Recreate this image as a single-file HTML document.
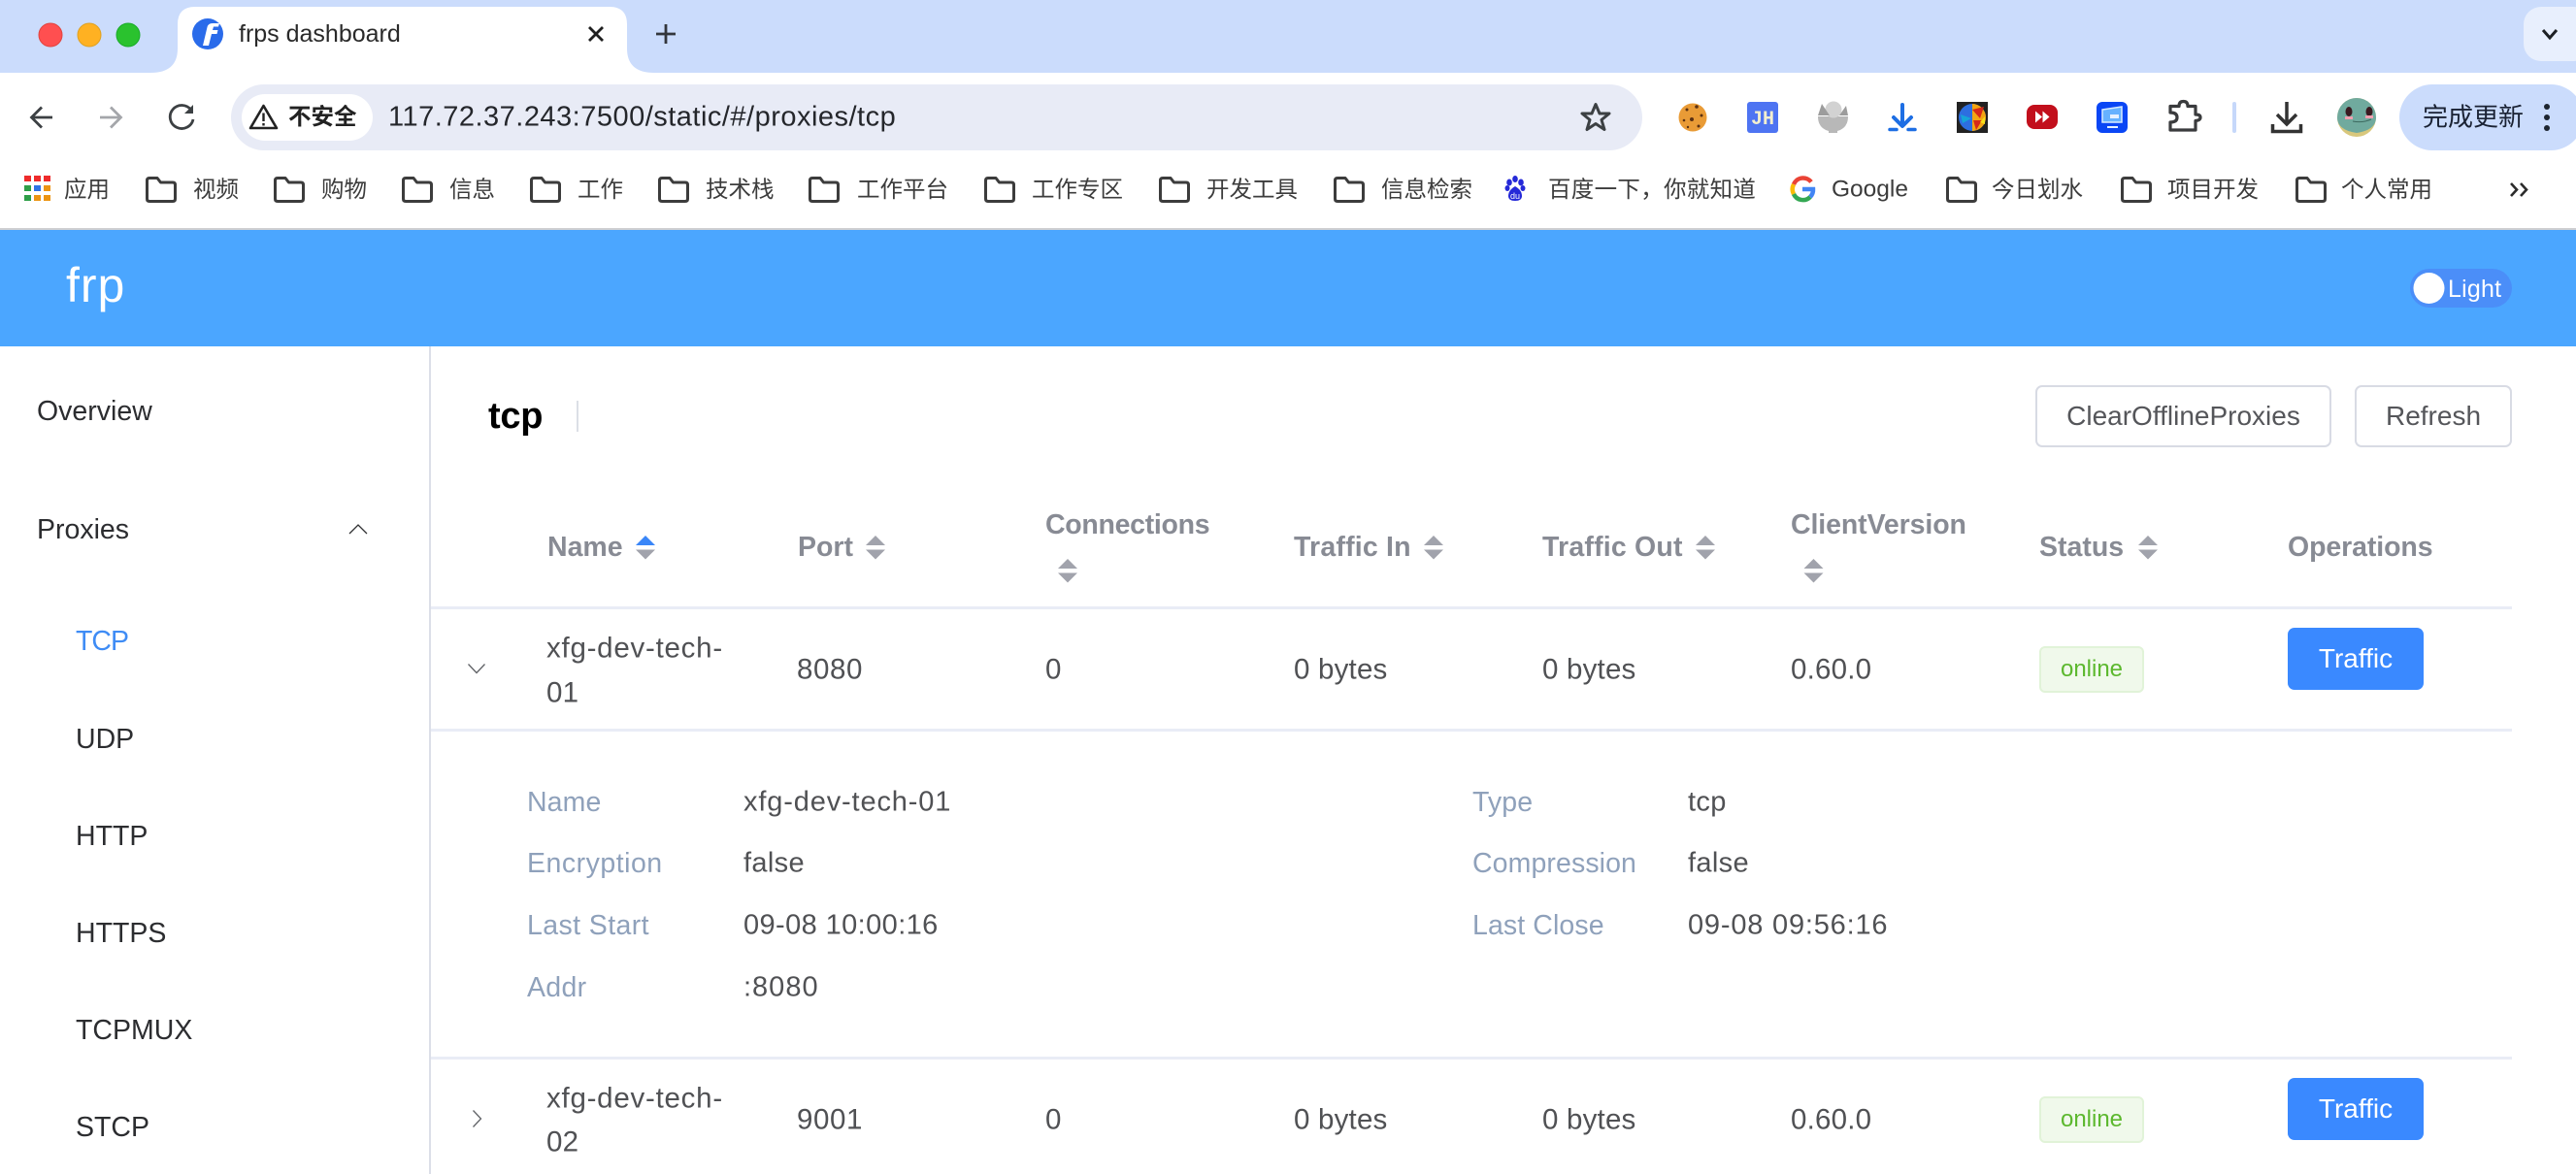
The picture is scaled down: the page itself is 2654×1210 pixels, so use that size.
<!DOCTYPE html>
<html lang="zh">
<head>
<meta charset="utf-8">
<title>frps dashboard</title>
<style>
html,body{margin:0;padding:0;background:#fff;width:2654px;height:1210px;overflow:hidden}
body{position:relative;font-family:"Liberation Sans","Noto Sans CJK SC",sans-serif;color:#303133}
.b{position:absolute}
.t{position:absolute;transform:translateY(-50%);white-space:nowrap;line-height:1.2}
.bm{font-size:23.5px;color:#3c3c3c}
.side{font-size:28.5px;color:#2c2d30;margin-top:1px}
.h{font-size:28.5px;font-weight:700;color:#888b94;margin-top:1px}
.c{font-size:29.5px;color:#505154;letter-spacing:.2px;margin-top:1px}
.l{font-size:28.5px;color:#8fa1bb;letter-spacing:.1px;margin-top:1px}
.v{font-size:29px;color:#505154;letter-spacing:.35px;margin-top:1px}
.line{position:absolute;left:444px;width:2144px;height:2.5px;background:#e9ecf6}
.btn{position:absolute;box-sizing:border-box;border:2.5px solid #d8dbe4;border-radius:7px;background:#fff;font-size:28px;color:#55565a;display:flex;align-items:center;justify-content:center}
.tr{position:absolute;left:2357px;width:140px;height:64px;background:#3a89ff;border-radius:7px;color:#fff;font-size:28px;display:flex;align-items:center;justify-content:center}
.tag{position:absolute;left:2101px;width:108px;height:48px;box-sizing:border-box;background:#f0f9eb;border:2px solid #e1f3d8;border-radius:6px;color:#5cb82e;font-size:24px;display:flex;align-items:center;justify-content:center}
svg{position:absolute;left:0;top:0}
</style>
</head>
<body>
<!-- browser chrome backgrounds -->
<div class="b" style="left:0;top:0;width:2654px;height:75px;background:#cbdcfc"></div>
<div class="b" style="left:0;top:75px;width:2654px;height:160px;background:#fff;border-top-left-radius:14px;border-top-right-radius:0"></div>
<div class="b" style="left:0;top:235px;width:2654px;height:2px;background:#cfcfd2"></div>
<div class="b" style="left:0;top:237px;width:2654px;height:120px;background:#4ba6ff"></div>
<div class="b" style="left:238px;top:87px;width:1454px;height:68px;background:#e8ebf6;border-radius:34px"></div>
<div class="b" style="left:249px;top:97px;width:135px;height:48px;background:#fff;border-radius:24px"></div>
<div class="b" style="left:2472px;top:87px;width:190px;height:68px;background:#cbdcfc;border-radius:34px"></div>
<div class="b" style="left:2600px;top:7px;width:70px;height:56px;background:#e8effd;border-radius:18px"></div>
<!-- sidebar divider -->
<div class="b" style="left:442px;top:357px;width:2px;height:853px;background:#dcdfe8"></div>
<div class="b" style="left:594px;top:413px;width:2px;height:32px;background:#dcdfe6"></div>

<svg width="2654" height="1210" viewBox="0 0 2654 1210" fill="none">
  <!-- tab -->
  <path d="M155 75Q183 75 183 50V25Q183 7 201 7H628Q646 7 646 25V50Q646 75 674 75Z" fill="#fff"/>
  <!-- traffic lights -->
  <circle cx="52" cy="36" r="12" fill="#ff4f50" stroke="#e0443e" stroke-width="1"/>
  <circle cx="92" cy="36" r="12" fill="#ffb122" stroke="#dea123" stroke-width="1"/>
  <circle cx="132" cy="36" r="12" fill="#2ac22e" stroke="#1aab29" stroke-width="1"/>
  <!-- favicon -->
  <circle cx="214" cy="35" r="16" fill="#2a6bea"/>
  <path d="M209 47L213.500 28Q214.500 24 219 24H226L225 27.500H220L219 31H224.500L223.500 35H218L215 47Z" fill="#fff"/>
  <!-- close -->
  <path d="M607 28L621 42M621 28L607 42" stroke="#1f1f1f" stroke-width="2.800"/>
  <!-- plus -->
  <path d="M686 25V45M676 35H696" stroke="#33363c" stroke-width="2.800"/>
  <!-- tab dropdown chevron -->
  <path d="M2620 31L2627 39L2634 31" stroke="#1c1f24" stroke-width="3"/>
  <!-- back / forward / reload -->
  <path d="M54 121H33M43 110.500L32.500 121L43 131.500" stroke="#3c4043" stroke-width="2.800"/>
  <path d="M103 121H124M114 110.500L124.500 121L114 131.500" stroke="#a4a6aa" stroke-width="2.800"/>
  <path d="M197 113.500A12 12 0 1 0 199 123" stroke="#3c4043" stroke-width="2.800"/>
  <path d="M199 108V117H190Z" fill="#3c4043"/>
  <!-- warning triangle -->
  <path d="M271.500 109L285 132H258Z" stroke="#222" stroke-width="2.600" stroke-linejoin="round"/>
  <path d="M271.500 116.500V125M271.500 127V129.500" stroke="#222" stroke-width="2.400"/>
  <!-- star -->
  <path d="M1644 107.500L1648 117H1658L1650 123.500L1653 133.500L1644 127.500L1635 133.500L1638 123.500L1630 117H1640Z" stroke="#3c4043" stroke-width="3" stroke-linejoin="round"/>
  <!-- cookie -->
  <circle cx="1744" cy="121" r="14.500" fill="#e99b36"/>
  <g fill="#5b3113"><circle cx="1748" cy="110" r="1.800"/><circle cx="1738" cy="113" r="1.500"/><circle cx="1743" cy="123" r="2"/><circle cx="1753" cy="119" r="1.500"/><circle cx="1735" cy="124" r="1.300"/><circle cx="1750" cy="130" r="1.500"/><circle cx="1739" cy="131" r="1.200"/></g>
  <!-- JH -->
  <rect x="1800" y="105" width="32" height="32" rx="3" fill="#4e74f2"/>
  <text x="1816" y="128" font-family="Liberation Mono,monospace" font-weight="700" font-size="20" fill="#f3efcf" text-anchor="middle" textLength="24" lengthAdjust="spacingAndGlyphs">JH</text>
  <!-- bowl -->
  <path d="M1873 120H1904Q1904 132 1893 135V137H1884V135Q1873 132 1873 120Z" fill="#b8b8b8"/>
  <circle cx="1889" cy="113" r="8.500" fill="#d2d2d2"/>
  <path d="M1873 119L1877 107L1885 119ZM1895 119L1902 109L1904 119Z" fill="#9c9c9c"/>
  <!-- blue download -->
  <path d="M1960 108V128M1951 121L1960 130L1969 121" stroke="#1d6ee4" stroke-width="4" stroke-linecap="round" stroke-linejoin="round"/>
  <path d="M1947 133.500H1954M1966 133.500H1973" stroke="#1d6ee4" stroke-width="3.500" stroke-linecap="round"/>
  <!-- brain -->
  <rect x="2016" y="105" width="32" height="32" fill="#222"/>
  <circle cx="2032" cy="121" r="14" fill="#2d6ee0"/>
  <path d="M2032 107A14 14 0 0 1 2032 135Z" fill="#f3a512"/>
  <path d="M2032 113L2044 110L2040 122ZM2033 124L2042 124L2036 134Z" fill="#d62a1a"/>
  <path d="M2020 118L2031 122L2022 127Z" fill="#16a4d8"/>
  <path d="M2040 126L2045 120L2045 128Z" fill="#f6e11b"/>
  <!-- red ff -->
  <rect x="2088" y="108" width="32" height="25" rx="8" fill="#c20f1c"/>
  <path d="M2097 114.500L2104 120.500L2097 126.500ZM2104.500 114.500L2111.500 120.500L2104.500 126.500Z" fill="#fff"/>
  <!-- monitor -->
  <rect x="2160" y="105" width="32" height="32" rx="6" fill="#0a46f5"/>
  <path d="M2166 113L2186 110V126H2166Z" fill="#66b1ff" stroke="#d8eaff" stroke-width="1.500"/>
  <rect x="2174" y="118" width="9" height="4" fill="#e6f0ff"/>
  <path d="M2171 131H2182" stroke="#e6f0ff" stroke-width="2"/>
  <!-- puzzle -->
  <path d="M2236 109.500H2245Q2245 104.500 2249.500 104.500Q2254 104.500 2254 109.500H2262V118Q2267 118 2267 121Q2267 124 2262 124.500V134H2236V126Q2243 126 2243 121Q2243 116 2236 116Z" stroke="#3a3b3d" stroke-width="3.200" stroke-linejoin="round"/>
  <!-- separator -->
  <rect x="2300" y="105" width="4" height="32" rx="2" fill="#c6d8fa"/>
  <!-- download -->
  <path d="M2356 105V128M2346 118L2356 128L2366 118" stroke="#333" stroke-width="3.500"/>
  <path d="M2341.500 128V135.500H2370.500V128" stroke="#333" stroke-width="3.500"/>
  <!-- avatar -->
  <circle cx="2428" cy="121" r="20" fill="#d8c77c"/>
  <path d="M2408 121A20 20 0 0 1 2448 121Q2448 134 2428 137Q2408 134 2408 121Z" fill="#70aa9e"/>
  <ellipse cx="2420" cy="115" rx="3.500" ry="5" fill="#3a1a20"/><ellipse cx="2441" cy="115" rx="3.500" ry="5" fill="#3a1a20"/>
  <rect x="2416" y="120" width="8" height="3" fill="#f0a0b0"/><rect x="2437" y="119" width="8" height="3" fill="#f0a0b0"/>
  <path d="M2424 125Q2434 127 2443 123" stroke="#3d6a60" stroke-width="1"/>
  <!-- kebab -->
  <circle cx="2624" cy="110" r="3" fill="#1d2530"/><circle cx="2624" cy="121" r="3" fill="#1d2530"/><circle cx="2624" cy="132" r="3" fill="#1d2530"/>
  <!-- apps grid -->
  <g>
    <rect x="25" y="181" width="7" height="6" fill="#ee2b2b"/><rect x="35" y="181" width="7" height="6" fill="#ee2b2b"/><rect x="45" y="181" width="7" height="6" fill="#ee2b2b"/>
    <rect x="25" y="191" width="7" height="6" fill="#2f9e48"/><rect x="35" y="191" width="7" height="6" fill="#2f72e4"/><rect x="45" y="191" width="7" height="6" fill="#ec9412"/>
    <rect x="25" y="201" width="7" height="6" fill="#2f9e48"/><rect x="35" y="201" width="7" height="6" fill="#ec9412"/><rect x="45" y="201" width="7" height="6" fill="#ec9412"/>
  </g>
  <!-- folders -->
  <defs>
    <path id="f" d="M1.500 4Q1.500 1.500 4 1.500H12L15.500 6H28Q30.500 6 30.500 8.500V23Q30.500 25.500 28 25.500H4Q1.500 25.500 1.500 23Z" stroke="#3c3c3c" stroke-width="3" stroke-linejoin="round"/>
  </defs>
  <use href="#f" x="150" y="182"/><use href="#f" x="282" y="182"/><use href="#f" x="414" y="182"/><use href="#f" x="546" y="182"/><use href="#f" x="678" y="182"/>
  <use href="#f" x="833" y="182"/><use href="#f" x="1014" y="182"/><use href="#f" x="1194" y="182"/><use href="#f" x="1374" y="182"/>
  <use href="#f" x="2005" y="182"/><use href="#f" x="2185" y="182"/><use href="#f" x="2365" y="182"/>
  <!-- baidu paw -->
  <g fill="#2529d8">
    <ellipse cx="1555" cy="188" rx="2.800" ry="3.500"/><ellipse cx="1567" cy="188" rx="2.800" ry="3.500"/>
    <ellipse cx="1561" cy="184.500" rx="2.800" ry="3.500"/><ellipse cx="1553" cy="194" rx="2.500" ry="3"/><ellipse cx="1569" cy="194" rx="2.500" ry="3"/>
    <path d="M1561 192Q1554 196 1554 202Q1554 207 1561 207Q1568 207 1568 202Q1568 196 1561 192Z"/>
  </g>
  <text x="1561" y="205" font-family="Liberation Sans,sans-serif" font-size="9" fill="#fff" text-anchor="middle">du</text>
  <!-- google G -->
  <g stroke-width="4.500" fill="none">
    <path d="M1866 187.500A10.500 10.500 0 0 0 1848 190" stroke="#ea4335"/>
    <path d="M1848 190A10.500 10.500 0 0 0 1848 200" stroke="#fbbc05"/>
    <path d="M1848 200A10.500 10.500 0 0 0 1865 203" stroke="#34a853"/>
    <path d="M1865 203A10.500 10.500 0 0 0 1868 195H1857" stroke="#4285f4"/>
  </g>
  <!-- >> -->
  <path d="M2587 189L2593 195.500L2587 202M2597 189L2603 195.500L2597 202" stroke="#2c2c2c" stroke-width="2.600"/>
  <!-- switch -->
  <rect x="2483" y="277" width="105" height="40" rx="20" fill="#4b8ef8"/>
  <circle cx="2502.500" cy="297" r="16" fill="#fff"/>
  <!-- proxies chevron -->
  <path d="M360 550L369 541L378 550" stroke="#303133" stroke-width="1.300"/>
  <!-- row chevrons -->
  <path d="M482.500 684.500L491 693.500L499.500 684.500" stroke="#606266" stroke-width="1.300"/>
  <path d="M487.500 1144.500L495.500 1153L487.500 1161.500" stroke="#606266" stroke-width="1.300"/>
  <!-- sort carets -->
  <g fill="#a1a3ac">
    <path d="M655 562L665 552L675 562Z" fill="#3a86f8"/><path d="M655 566.500L665 576.500L675 566.500Z"/>
    <path d="M892 562L902 552L912 562ZM892 566.500L902 576.500L912 566.500Z"/>
    <path d="M1090 586L1100 576L1110 586ZM1090 590.500L1100 600.500L1110 590.500Z"/>
    <path d="M1467 562L1477 552L1487 562ZM1467 566.500L1477 576.500L1487 566.500Z"/>
    <path d="M1747 562L1757 552L1767 562ZM1747 566.500L1757 576.500L1767 566.500Z"/>
    <path d="M1858.500 586L1868.500 576L1878.500 586ZM1858.500 590.500L1868.500 600.500L1878.500 590.500Z"/>
    <path d="M2203 562L2213 552L2223 562ZM2203 566.500L2213 576.500L2223 566.500Z"/>
  </g>
</svg>

<!-- tab & toolbar text -->
<div class="t" style="left:246px;top:35px;font-size:25px;color:#2a2a2a">frps dashboard</div>
<div class="t" style="left:297px;top:120px;font-size:23.5px;font-weight:700;color:#222">不安全</div>
<div class="t" style="left:400px;top:121px;font-size:29px;letter-spacing:.49px;color:#24262b">117.72.37.243:7500/static/#/proxies/tcp</div>
<div class="t" style="left:2496px;top:121px;font-size:26px;color:#1a2233">完成更新</div>

<!-- bookmarks -->
<div class="t bm" style="left:66px;top:195px">应用</div>
<div class="t bm" style="left:199px;top:195px">视频</div>
<div class="t bm" style="left:331px;top:195px">购物</div>
<div class="t bm" style="left:463px;top:195px">信息</div>
<div class="t bm" style="left:595px;top:195px">工作</div>
<div class="t bm" style="left:727px;top:195px">技术栈</div>
<div class="t bm" style="left:883px;top:195px">工作平台</div>
<div class="t bm" style="left:1063px;top:195px">工作专区</div>
<div class="t bm" style="left:1243px;top:195px">开发工具</div>
<div class="t bm" style="left:1423px;top:195px">信息检索</div>
<div class="t bm" style="left:1595px;top:195px;letter-spacing:.3px">百度一下，你就知道</div>
<div class="t bm" style="left:1887px;top:195px;font-size:24.5px">Google</div>
<div class="t bm" style="left:2052px;top:195px">今日划水</div>
<div class="t bm" style="left:2233px;top:195px">项目开发</div>
<div class="t bm" style="left:2412px;top:195px">个人常用</div>

<!-- header -->
<div class="t" style="left:68px;top:294px;font-size:50px;letter-spacing:1px;color:#fff">frp</div>
<div class="t" style="left:2522px;top:298px;font-size:25px;letter-spacing:.2px;color:#fff">Light</div>

<!-- sidebar -->
<div class="t side" style="left:38px;top:423px">Overview</div>
<div class="t side" style="left:38px;top:545px">Proxies</div>
<div class="t side" style="left:78px;top:660px;color:#3f8cf5;letter-spacing:-1px">TCP</div>
<div class="t side" style="left:78px;top:761px">UDP</div>
<div class="t side" style="left:78px;top:861px">HTTP</div>
<div class="t side" style="left:78px;top:961px">HTTPS</div>
<div class="t side" style="left:78px;top:1061px">TCPMUX</div>
<div class="t side" style="left:78px;top:1161px">STCP</div>

<!-- title + actions -->
<div class="t" style="left:503px;top:430px;font-size:38px;font-weight:700;color:#000;letter-spacing:-.3px">tcp</div>
<div class="btn" style="left:2097px;top:397px;width:305px;height:64px">ClearOfflineProxies</div>
<div class="btn" style="left:2426px;top:397px;width:162px;height:64px">Refresh</div>

<!-- table header -->
<div class="t h" style="left:564px;top:563px">Name</div>
<div class="t h" style="left:822px;top:563px">Port</div>
<div class="t h" style="left:1077px;top:540px;letter-spacing:-.3px">Connections</div>
<div class="t h" style="left:1333px;top:563px;letter-spacing:.2px">Traffic In</div>
<div class="t h" style="left:1589px;top:563px;letter-spacing:.2px">Traffic Out</div>
<div class="t h" style="left:1845px;top:540px;letter-spacing:-.1px">ClientVersion</div>
<div class="t h" style="left:2101px;top:563px">Status</div>
<div class="t h" style="left:2357px;top:563px;letter-spacing:-.1px">Operations</div>
<div class="line" style="top:625px"></div>

<!-- row 1 -->
<div class="t c" style="left:563px;top:667px;letter-spacing:.75px">xfg-dev-tech-</div>
<div class="t c" style="left:563px;top:713px">01</div>
<div class="t c" style="left:821px;top:689px;letter-spacing:.6px">8080</div>
<div class="t c" style="left:1077px;top:689px">0</div>
<div class="t c" style="left:1333px;top:689px">0 bytes</div>
<div class="t c" style="left:1589px;top:689px">0 bytes</div>
<div class="t c" style="left:1845px;top:689px">0.60.0</div>
<div class="tag" style="top:666px">online</div>
<div class="tr" style="top:647px">Traffic</div>
<div class="line" style="top:751px"></div>

<!-- detail -->
<div class="t l" style="left:543px;top:826px">Name</div>
<div class="t v" style="left:766px;top:826px;letter-spacing:.85px">xfg-dev-tech-01</div>
<div class="t l" style="left:543px;top:889px;letter-spacing:.5px">Encryption</div>
<div class="t v" style="left:766px;top:889px">false</div>
<div class="t l" style="left:543px;top:953px;letter-spacing:.4px">Last Start</div>
<div class="t v" style="left:766px;top:953px;letter-spacing:.4px">09-08 10:00:16</div>
<div class="t l" style="left:543px;top:1017px;letter-spacing:.3px">Addr</div>
<div class="t v" style="left:766px;top:1017px;letter-spacing:1px">:8080</div>
<div class="t l" style="left:1517px;top:826px">Type</div>
<div class="t v" style="left:1739px;top:826px">tcp</div>
<div class="t l" style="left:1517px;top:889px">Compression</div>
<div class="t v" style="left:1739px;top:889px">false</div>
<div class="t l" style="left:1517px;top:953px">Last Close</div>
<div class="t v" style="left:1739px;top:953px;letter-spacing:.8px">09-08 09:56:16</div>
<div class="line" style="top:1089px"></div>

<!-- row 2 -->
<div class="t c" style="left:563px;top:1131px;letter-spacing:.75px">xfg-dev-tech-</div>
<div class="t c" style="left:563px;top:1176px">02</div>
<div class="t c" style="left:821px;top:1153px;letter-spacing:.6px">9001</div>
<div class="t c" style="left:1077px;top:1153px">0</div>
<div class="t c" style="left:1333px;top:1153px">0 bytes</div>
<div class="t c" style="left:1589px;top:1153px">0 bytes</div>
<div class="t c" style="left:1845px;top:1153px">0.60.0</div>
<div class="tag" style="top:1130px">online</div>
<div class="tr" style="top:1111px">Traffic</div>
</body>
</html>
